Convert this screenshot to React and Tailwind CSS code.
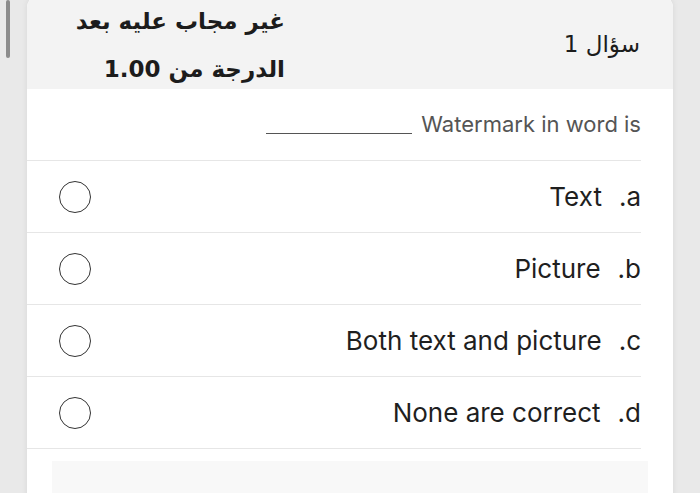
const options = [
  { letter: '.a', label: 'Text' },
  { letter: '.b', label: 'Picture' },
  { letter: '.c', label: 'Both text and picture' },
  { letter: '.d', label: 'None are correct' },
]

export default function App() {
  return (
    <div className="relative h-[493px] w-[700px] overflow-hidden bg-[#e9e9e9] font-['Inter','DejaVu_Sans',sans-serif]">
      {/* scroll thumb */}
      <div className="absolute left-[6px] top-0 h-[58px] w-[4px] rounded-full bg-[#8c8c8c]" />

      <div className="ml-[27px] -mt-[6px] w-[646px] h-[510px] rounded-t-[14px] bg-white shadow-[0_0_6px_rgba(0,0,0,0.08)] overflow-hidden">
        {/* header */}
        <div className="flex h-[95px] items-center justify-between bg-[#f3f3f3] pt-[6px] pl-[40px] pr-[33px]">
          <div className="flex flex-col items-end gap-[12px] text-[23px] font-bold leading-[36px] text-[#1c1c1c] font-['DejaVu_Sans',sans-serif] w-[218px]">
            <span dir="rtl">غير مجاب عليه بعد</span>
            <span dir="rtl">الدرجة من 1.00</span>
          </div>
          <div dir="rtl" className="text-[23px] text-[#1c1c1c] font-['DejaVu_Sans',sans-serif]">سؤال 1</div>
        </div>

        {/* question */}
        <div className="mr-[32px]">
          <div className="flex h-[72px] items-center justify-end gap-[9px] border-b border-[#e6e6e6] text-[22px] text-[#555]">
            <span className="mt-[18px] block h-[1.5px] w-[146px] bg-[#555]" />
            <span>Watermark in word is</span>
          </div>

          {options.map((o) => (
            <div key={o.letter} className="flex h-[72px] items-center justify-between border-b border-[#e6e6e6] pl-[32px]">
              <span className="block h-[32px] w-[32px] rounded-full border-[1.5px] border-[#333]" />
              <div className="flex items-center gap-[17px] text-[26px] text-[#1f1f1f]">
                <span>{o.label}</span>
                <span>{o.letter}</span>
              </div>
            </div>
          ))}
        </div>

        {/* next block */}
        <div className="mx-[25px] mt-[12px] h-[60px] bg-[#f8f8f8]" />
      </div>
    </div>
  )
}
